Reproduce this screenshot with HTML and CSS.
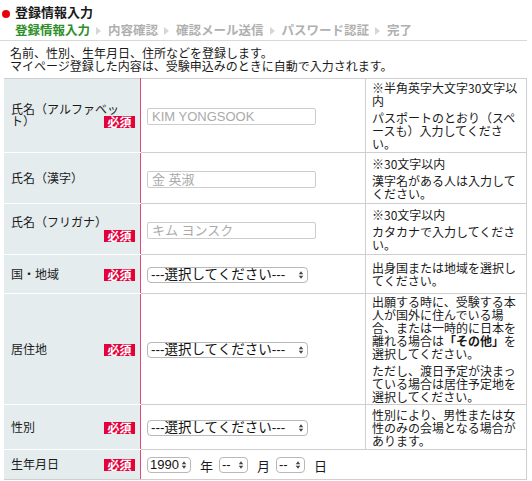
FILE: index.html
```html
<!DOCTYPE html>
<html lang="ja">
<head>
<meta charset="utf-8">
<link rel="stylesheet" href="styles.css">
</head>
<body>
<div class="page">
  <div class="head">
    <h1 class="title"><span class="dot"></span>登録情報入力</h1>
    <div class="steps">
      <span class="step current">登録情報入力</span><span class="arr"></span>
      <span class="step">内容確認</span><span class="arr"></span>
      <span class="step">確認メール送信</span><span class="arr"></span>
      <span class="step">パスワード認証</span><span class="arr"></span>
      <span class="step">完了</span>
    </div>
  </div>
  <p class="desc">名前、性別、生年月日、住所などを登録します。<br>マイページ登録した内容は、受験申込みのときに自動で入力されます。</p>
  <table class="form">
    <colgroup><col class="c1"><col class="c2"><col class="c3"></colgroup>
    <tr class="r1">
      <th>氏名（アルファベット）<span class="req">必須</span></th>
      <td class="field"><input class="txt" type="text" placeholder="KIM YONGSOOK"></td>
      <td class="note"><p>※半角英字大文字30文字以内</p><p>パスポートのとおり（スペースも）入力してください。</p></td>
    </tr>
    <tr class="r2">
      <th>氏名（漢字）</th>
      <td class="field"><input class="txt" type="text" placeholder="金 英淑"></td>
      <td class="note"><p>※30文字以内</p><p>漢字名がある人は入力してください。</p></td>
    </tr>
    <tr class="r3">
      <th>氏名（フリガナ）<span class="req">必須</span></th>
      <td class="field"><input class="txt" type="text" placeholder="キム ヨンスク"></td>
      <td class="note"><p>※30文字以内</p><p>カタカナで入力してください。</p></td>
    </tr>
    <tr class="r4">
      <th>国・地域<span class="req">必須</span></th>
      <td class="field"><span class="sel w-big"><select><option>---選択してください---</option></select><svg viewBox="0 0 8 12"><path d="M4 1 L7 5 H1 Z M4 11 L7 7 H1 Z" fill="#444"/></svg></span></td>
      <td class="note"><p>出身国または地域を選択してください。</p></td>
    </tr>
    <tr class="r5">
      <th>居住地<span class="req">必須</span></th>
      <td class="field"><span class="sel w-big"><select><option>---選択してください---</option></select><svg viewBox="0 0 8 12"><path d="M4 1 L7 5 H1 Z M4 11 L7 7 H1 Z" fill="#444"/></svg></span></td>
      <td class="note"><p>出願する時に、受験する本人が国外に住んでいる場合、または一時的に日本を離れる場合は<b>「その他」</b>を選択してください。</p><p>ただし、渡日予定が決まっている場合は居住予定地を選択してください。</p></td>
    </tr>
    <tr class="r6">
      <th>性別<span class="req">必須</span></th>
      <td class="field"><span class="sel w-big"><select><option>---選択してください---</option></select><svg viewBox="0 0 8 12"><path d="M4 1 L7 5 H1 Z M4 11 L7 7 H1 Z" fill="#444"/></svg></span></td>
      <td class="note"><p>性別により、男性または女性のみの会場となる場合があります。</p></td>
    </tr>
    <tr class="r7">
      <th>生年月日<span class="req">必須</span></th>
      <td class="field date" colspan="2">
        <span class="sel w-year"><select><option>1990</option></select><svg viewBox="0 0 8 12"><path d="M4 1 L7 5 H1 Z M4 11 L7 7 H1 Z" fill="#444"/></svg></span><span class="unit">年</span><span class="sel w-small"><select><option>--</option></select><svg viewBox="0 0 8 12"><path d="M4 1 L7 5 H1 Z M4 11 L7 7 H1 Z" fill="#444"/></svg></span><span class="unit">月</span><span class="sel w-small"><select><option>--</option></select><svg viewBox="0 0 8 12"><path d="M4 1 L7 5 H1 Z M4 11 L7 7 H1 Z" fill="#444"/></svg></span><span class="unit">日</span>
      </td>
    </tr>
  </table>
</div>
</body>
</html>
```

FILE: styles.css
```css
* { box-sizing: border-box; }
html, body { margin: 0; padding: 0; background: #fff; }
body {
  font-family: "Noto Sans CJK JP", "Liberation Sans", sans-serif;
  font-size: 12px;
  color: #1a1a1a;
  width: 532px;
  overflow: hidden;
}
.page { width: 527px; }
.head { border-bottom: 1px solid #d8d8d8; height: 41px; }
.title {
  margin: 0;
  padding: 4px 0 0 2px;
  font-size: 13px;
  font-weight: bold;
  line-height: 16px;
  height: 20px;
  display: flex;
  align-items: center;
}
.dot {
  width: 8px; height: 8px;
  border-radius: 50%;
  background: #e8000b;
  margin: 3px 5px 0 0;
}
.steps {
  padding-left: 15px;
  margin-top: 2px;
  font-size: 12.5px;
  font-weight: bold;
  line-height: 16px;
  color: #b0b0b0;
  display: flex;
  align-items: center;
}
.step.current { color: #2f8f2a; }
.arr {
  width: 0; height: 0;
  border-left: 5px solid #d6d6d6;
  border-top: 4px solid transparent;
  border-bottom: 4px solid transparent;
  margin: 1px 7px 0 6px;
}
.desc {
  margin: 0;
  padding: 5px 0 6px 10px;
  line-height: 13px;
  font-size: 12px;
}
.form {
  margin-left: 4px;
  width: 522px;
  border-collapse: collapse;
  table-layout: fixed;
}
.c1 { width: 136px; }
.c2 { width: 225px; }
.c3 { width: 161px; }
.form th, .form td {
  border: 1px solid #cfcfcf;
  vertical-align: middle;
  padding: 0;
}
.form th {
  background: #e5ecee;
  text-align: left;
  font-weight: normal;
  padding: 0 5px 0 6px;
  line-height: 12.5px;
  border-left-color: #e5ecee;
  border-bottom: 1px solid #fff;
  border-right: 1px solid #e8457a;
}
.form tr:last-child th { border-bottom-color: #cfcfcf; }
.req {
  float: right;
  display: flex;
  align-items: center;
  justify-content: center;
  background: #e4003b;
  color: #fff;
  font-weight: bold;
  font-size: 12px;
  line-height: 12px;
  height: 12px;
  width: 31px;
  white-space: nowrap;
  margin-top: 1px;
}
.field { padding: 0 6px !important; }
.note { padding: 0 5px 0 6px !important; line-height: 13px; }
.note p { margin: 0; }
.note p + p { margin-top: 4px; }
.note b { font-weight: bold; }
.r1 { height: 74px; }
.r2 { height: 51px; }
.r3 { height: 51px; }
.r4 { height: 39px; }
.r5 { height: 111px; }
.r6 { height: 45px; }
.r7 { height: 30px; }
.txt {
  width: 169px;
  height: 17px;
  border: 1px solid #cccccc;
  border-radius: 2px;
  padding: 0 4px;
  font-family: "Liberation Sans", "Noto Sans CJK JP", sans-serif;
  font-size: 13px;
  display: block;
  margin-top: 2px;
}
.txt::placeholder { color: #aaaaaa; }
.sel {
  position: relative;
  display: inline-block;
  vertical-align: middle;
}
.sel select {
  appearance: none;
  -webkit-appearance: none;
  border: 1px solid #b8b8b8;
  border-radius: 4px;
  background: #fff;
  height: 16px;
  padding: 0 12px 0 3px;
  font-family: "Liberation Sans", "Noto Sans CJK JP", sans-serif;
  font-size: 13.5px;
  line-height: 14px;
  color: #111;
  display: block;
  width: 100%;
}
.w-year select, .w-small select { padding: 0 8px 0 2px; font-size: 13px; }
.sel svg {
  position: absolute;
  right: 4px;
  top: 3px;
  width: 6px;
  height: 10px;
}
.w-big { width: 161px; }
.w-year { width: 44px; }
.w-small { width: 29px; }
.date { font-size: 13px; }
.unit { display: inline-block; vertical-align: middle; margin: 0 6px 0 9px; }
```
